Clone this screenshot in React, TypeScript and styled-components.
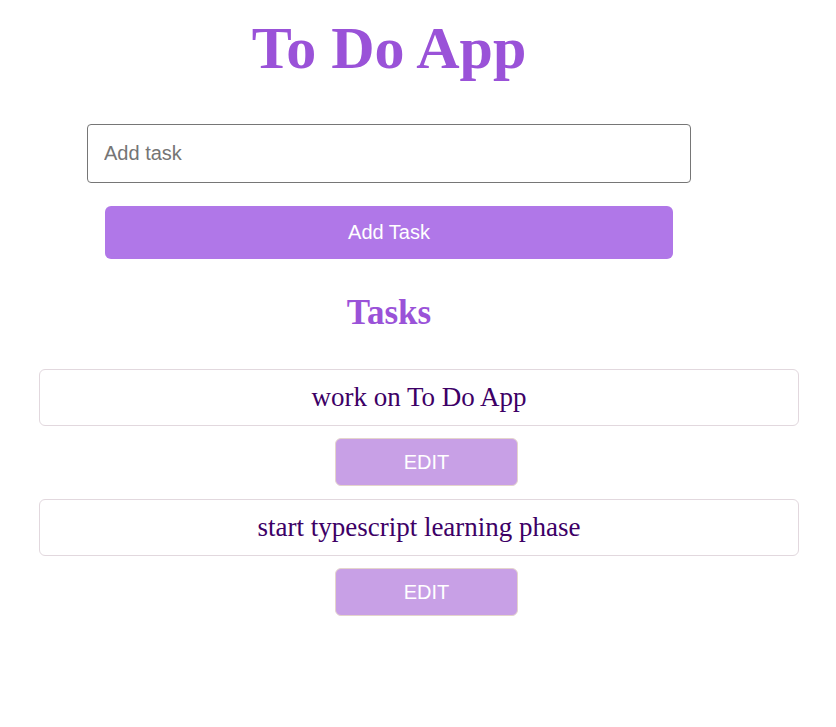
import React from "react";
import styled, { createGlobalStyle } from "styled-components";

const GlobalStyle = createGlobalStyle`
  body {
    margin: 8px;
    background: #ffffff;
    font-family: "Liberation Serif", "Times New Roman", serif;
  }
`;

const Page = styled.div`
  display: flex;
  flex-direction: column;
`;

const FormSection = styled.section`
  width: 762px;
  display: flex;
  flex-direction: column;
  align-items: center;
`;

const Title = styled.h1`
  margin: 6px 0 0;
  font-family: "Liberation Serif", "Times New Roman", serif;
  font-weight: bold;
  font-size: 60px;
  line-height: normal;
  color: #9a52d8;
`;

const TaskInput = styled.input`
  box-sizing: border-box;
  margin-top: 41px;
  width: 604px;
  height: 59px;
  padding: 0 16px;
  border: 1px solid #767676;
  border-radius: 4px;
  font-family: "Liberation Sans", Arial, sans-serif;
  font-size: 20px;
  color: #222;
  outline: none;
  &::placeholder {
    color: #757575;
  }
`;

const AddButton = styled.button`
  margin-top: 23px;
  width: 568px;
  height: 53px;
  border: none;
  border-radius: 6px;
  background: #b077e8;
  color: #ffffff;
  font-family: "Liberation Sans", Arial, sans-serif;
  font-size: 20px;
  cursor: pointer;
`;

const TasksHeading = styled.h2`
  margin: 34px 0 0;
  font-family: "Liberation Serif", "Times New Roman", serif;
  font-weight: bold;
  font-size: 35px;
  line-height: normal;
  color: #9a52d8;
`;

const TaskList = styled.ul`
  list-style: none;
  margin: 36px 0 0;
  padding: 0 29px 0 31px;
  display: flex;
  flex-direction: column;
  gap: 13px;
`;

const TaskItem = styled.li`
  display: flex;
  flex-direction: column;
  align-items: center;
  gap: 12px;
`;

const TaskCard = styled.div`
  box-sizing: border-box;
  width: 100%;
  height: 57px;
  border: 1px solid #e2d8de;
  border-radius: 6px;
  display: flex;
  align-items: center;
  justify-content: center;
  font-family: "Liberation Serif", "Times New Roman", serif;
  font-size: 27px;
  color: #3d0066;
`;

const EditButton = styled.button`
  box-sizing: border-box;
  margin-left: 15px;
  width: 183px;
  height: 48px;
  border: 1px solid #e4d4cc;
  border-radius: 6px;
  background: #c8a0e6;
  color: #ffffff;
  font-family: "Liberation Sans", Arial, sans-serif;
  font-size: 20px;
  cursor: pointer;
`;

const tasks = ["work on To Do App", "start typescript learning phase"];

export default function App() {
  return (
    <>
      <GlobalStyle />
      <Page>
        <FormSection>
          <Title>To Do App</Title>
          <TaskInput placeholder="Add task" />
          <AddButton>Add Task</AddButton>
          <TasksHeading>Tasks</TasksHeading>
        </FormSection>
        <TaskList>
          {tasks.map((t) => (
            <TaskItem key={t}>
              <TaskCard>{t}</TaskCard>
              <EditButton>EDIT</EditButton>
            </TaskItem>
          ))}
        </TaskList>
      </Page>
    </>
  );
}
